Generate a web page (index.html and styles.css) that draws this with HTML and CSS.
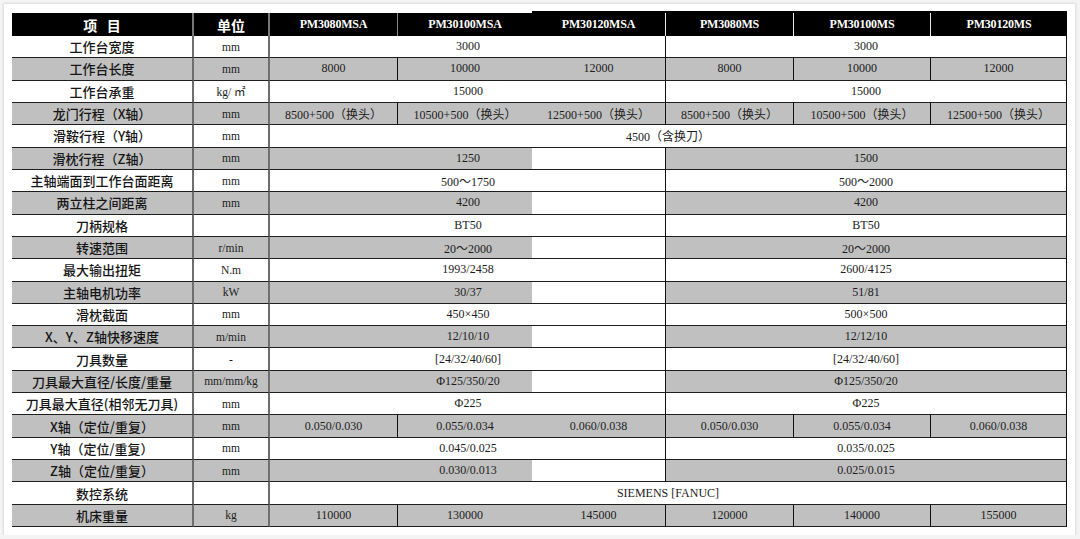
FILE: index.html
```html
<!DOCTYPE html>
<html lang="zh-CN">
<head>
<meta charset="utf-8">
<title>参数表</title>
<link rel="stylesheet" href="styles.css">
</head>
<body>
<div class="card">
  <div class="sheet">
    <div class="row hd">
      <div class="c lab">项&nbsp;&nbsp;&nbsp;目</div>
      <div class="c unit">单位</div>
      <div class="c v">PM3080MSA</div>
      <div class="c v nb">PM30100MSA</div>
      <div class="c v rt">PM30120MSA</div>
      <div class="c v rt">PM3080MS</div>
      <div class="c v rt">PM30100MS</div>
      <div class="c v rt">PM30120MS</div>
    </div>

    <div class="row">
      <div class="c lab">工作台宽度</div><div class="c unit">mm</div>
      <div class="c v s2 nb pl">3000</div><div class="c v e"></div><div class="c v s3">3000</div>
    </div>
    <div class="row g">
      <div class="c lab">工作台长度</div><div class="c unit">mm</div>
      <div class="c v">8000</div><div class="c v nb">10000</div><div class="c v">12000</div><div class="c v">8000</div><div class="c v">10000</div><div class="c v">12000</div>
    </div>
    <div class="row">
      <div class="c lab">工作台承重</div><div class="c unit">kg/ ㎡</div>
      <div class="c v s2 nb pl">15000</div><div class="c v e"></div><div class="c v s3">15000</div>
    </div>
    <div class="row g">
      <div class="c lab">龙门行程（X轴）</div><div class="c unit">mm</div>
      <div class="c v">8500+500（换头）</div><div class="c v nb">10500+500（换头）</div><div class="c v">12500+500（换头）</div><div class="c v">8500+500（换头）</div><div class="c v">10500+500（换头）</div><div class="c v">12500+500（换头）</div>
    </div>
    <div class="row">
      <div class="c lab">滑鞍行程（Y轴）</div><div class="c unit">mm</div>
      <div class="c v s6">4500（含换刀）</div>
    </div>
    <div class="row g">
      <div class="c lab">滑枕行程（Z轴）</div><div class="c unit">mm</div>
      <div class="c v s2 nb pl">1250</div><div class="c v e"></div><div class="c v s3">1500</div>
    </div>
    <div class="row">
      <div class="c lab">主轴端面到工作台面距离</div><div class="c unit">mm</div>
      <div class="c v s2 nb pl">500～1750</div><div class="c v e"></div><div class="c v s3">500～2000</div>
    </div>
    <div class="row g">
      <div class="c lab">两立柱之间距离</div><div class="c unit">mm</div>
      <div class="c v s2 nb pl">4200</div><div class="c v e"></div><div class="c v s3">4200</div>
    </div>
    <div class="row">
      <div class="c lab">刀柄规格</div><div class="c unit"></div>
      <div class="c v s2 nb pl">BT50</div><div class="c v e"></div><div class="c v s3">BT50</div>
    </div>
    <div class="row g">
      <div class="c lab">转速范围</div><div class="c unit">r/min</div>
      <div class="c v s2 nb pl">20～2000</div><div class="c v e"></div><div class="c v s3">20～2000</div>
    </div>
    <div class="row">
      <div class="c lab">最大输出扭矩</div><div class="c unit">N.m</div>
      <div class="c v s2 nb pl">1993/2458</div><div class="c v e"></div><div class="c v s3">2600/4125</div>
    </div>
    <div class="row g">
      <div class="c lab">主轴电机功率</div><div class="c unit">kW</div>
      <div class="c v s2 nb pl">30/37</div><div class="c v e"></div><div class="c v s3">51/81</div>
    </div>
    <div class="row">
      <div class="c lab">滑枕截面</div><div class="c unit">mm</div>
      <div class="c v s2 nb pl">450×450</div><div class="c v e"></div><div class="c v s3">500×500</div>
    </div>
    <div class="row g">
      <div class="c lab">X、Y、Z轴快移速度</div><div class="c unit">m/min</div>
      <div class="c v s2 nb pl">12/10/10</div><div class="c v e"></div><div class="c v s3">12/12/10</div>
    </div>
    <div class="row">
      <div class="c lab">刀具数量</div><div class="c unit">-</div>
      <div class="c v s2 nb pl">[24/32/40/60]</div><div class="c v e"></div><div class="c v s3">[24/32/40/60]</div>
    </div>
    <div class="row g">
      <div class="c lab">刀具最大直径/长度/重量</div><div class="c unit">mm/mm/kg</div>
      <div class="c v s2 nb pl">Φ125/350/20</div><div class="c v e"></div><div class="c v s3">Φ125/350/20</div>
    </div>
    <div class="row">
      <div class="c lab">刀具最大直径(相邻无刀具)</div><div class="c unit">mm</div>
      <div class="c v s2 nb pl">Φ225</div><div class="c v e"></div><div class="c v s3">Φ225</div>
    </div>
    <div class="row g">
      <div class="c lab">X轴（定位/重复）</div><div class="c unit">mm</div>
      <div class="c v">0.050/0.030</div><div class="c v nb">0.055/0.034</div><div class="c v">0.060/0.038</div><div class="c v">0.050/0.030</div><div class="c v">0.055/0.034</div><div class="c v">0.060/0.038</div>
    </div>
    <div class="row">
      <div class="c lab">Y轴（定位/重复）</div><div class="c unit">mm</div>
      <div class="c v s2 nb pl">0.045/0.025</div><div class="c v e"></div><div class="c v s3">0.035/0.025</div>
    </div>
    <div class="row g">
      <div class="c lab">Z轴（定位/重复）</div><div class="c unit">mm</div>
      <div class="c v s2 nb pl">0.030/0.013</div><div class="c v e"></div><div class="c v s3">0.025/0.015</div>
    </div>
    <div class="row">
      <div class="c lab">数控系统</div><div class="c unit"></div>
      <div class="c v s6">SIEMENS [FANUC]</div>
    </div>
    <div class="row g">
      <div class="c lab">机床重量</div><div class="c unit">kg</div>
      <div class="c v">110000</div><div class="c v nb">130000</div><div class="c v">145000</div><div class="c v">120000</div><div class="c v">140000</div><div class="c v">155000</div>
    </div>
  </div>
</div>
</body>
</html>
```

FILE: styles.css
```css
html, body {
  margin: 0;
  padding: 0;
  background: #f4f4f4;
}
body {
  padding: 4px 0 0 4px;
}
.card {
  width: 1071px;
  height: 531px;
  box-sizing: border-box;
  background: #ffffff;
  box-shadow: 0 0 2px 1px rgba(0, 0, 0, 0.10);
  padding: 9px 0 0 8px;
}
.sheet {
  display: grid;
  width: 1055px;
  height: 514px;
  grid-template-columns: 182px 76px 128px 134px 134px 128px 137px 136px;
  grid-template-rows: 23px repeat(22, 1fr);
}
.row {
  display: contents;
}
.c {
  display: flex;
  align-items: center;
  justify-content: center;
  box-sizing: border-box;
  border-bottom: 1px solid #1e1e1e;
  font-family: "Liberation Serif", "Noto Sans CJK SC", serif;
  font-size: 12px;
  color: #1c1c1c;
  white-space: nowrap;
  background: #ffffff;
  min-width: 0;
  overflow: hidden;
}
.lab {
  font-family: "Noto Sans CJK SC", sans-serif;
  font-size: 13px;
  font-weight: 500;
  color: #161616;
  border-right: 2px solid #6e6e6e;
}
.unit {
  font-size: 11.5px;
  border-right: 2px solid #6e6e6e;
}
.v {
  border-right: 1px solid #111111;
}
.nb {
  border-right: none;
}
.s2 { grid-column: span 2; }
.s3 { grid-column: span 3; }
.s6 { grid-column: span 6; }
.pl { padding-left: 134px; }

.g .c {
  background: #c0c0c0;
}
.g .e {
  background: #ffffff;
}

.hd .c {
  background: #000000;
  color: #ffffff;
  font-weight: bold;
  border-bottom: none;
  overflow: visible;
}
.hd .lab {
  font-size: 14px;
  border-right: 2px solid #777777;
}
.hd .unit {
  font-family: "Noto Sans CJK SC", sans-serif;
  font-size: 14px;
  border-right: 2px solid #777777;
}
.hd .v {
  border-right: 1px solid #888888;
  letter-spacing: -0.2px;
}
.hd .nb {
  border-right: none;
}
.hd .rt {
  border-right: 1px solid #e8e8e8;
  box-shadow: 0 -2px 0 #000000;
}
.hd .rt:last-child {
  border-right: none;
}
```
